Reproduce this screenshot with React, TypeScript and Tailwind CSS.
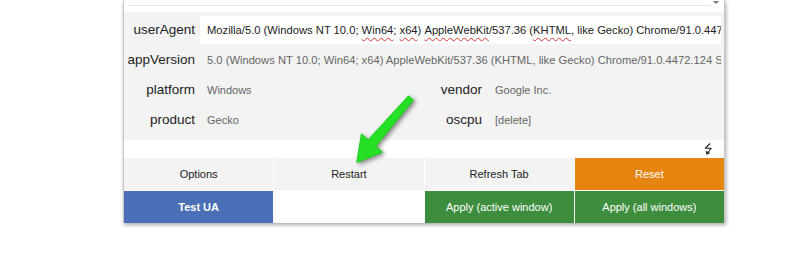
import React from "react";

const sq = "underline decoration-wavy decoration-[#e03030] decoration-1 underline-offset-[3px]";

function Btn({ children, cls }: { children: React.ReactNode; cls: string }) {
  return (
    <div className={`h-[32px] flex items-center justify-center text-[11px] ${cls}`}>{children}</div>
  );
}

export default function App() {
  return (
    <div className="relative w-[800px] h-[270px] bg-white overflow-hidden" style={{ fontFamily: '"Liberation Sans", Arial, sans-serif' }}>
      <div className="ml-[123px] w-[602px] border-l border-r border-[#c8c8c8] shadow-[1px_2px_4px_rgba(0,0,0,0.35)] bg-white">
        {/* top select remnant */}
        <div className="h-[12px] bg-white flex items-start">
          <div className="ml-[4px] flex-1 h-[6px] border-b border-[#e4e4e4]" />
          <div className="w-[10px] flex justify-center pt-[1px]">
            <div className="w-0 h-0 border-l-[3px] border-r-[3px] border-t-[3px] border-l-transparent border-r-transparent border-t-[#777]" />
          </div>
          <div className="w-[3px]" />
        </div>
        {/* info area */}
        <div className="bg-[#f3f3f3] pt-[3px] pb-[5px]">
          <div className="h-[30px] flex items-center">
            <div className="w-[76px] pr-[5px] text-right text-[13.5px] text-[#222]">userAgent</div>
            <div className="flex-1 mr-[3px] h-[28px] bg-white flex items-center pl-[7px] overflow-hidden whitespace-pre text-[11.2px] text-[#222]">
              {"Mozilla/5.0 (Windows NT 10.0; "}
              <span className={sq}>Win64</span>
              {"; "}
              <span className={sq}>x64</span>
              {") "}
              <span className={sq}>AppleWebKit</span>
              {"/537.36 ("}
              <span className={sq}>KHTML</span>
              {", like Gecko) Chrome/91.0.4472.124 Safari/537.36"}
            </div>
          </div>
          <div className="h-[30px] flex items-center">
            <div className="w-[76px] pr-[5px] text-right text-[13.5px] text-[#222]">appVersion</div>
            <div className="flex-1 mr-[3px] pl-[7px] overflow-hidden whitespace-pre text-[11.2px] text-[#666]">
              {"5.0 (Windows NT 10.0; Win64; x64) AppleWebKit/537.36 (KHTML, like Gecko) Chrome/91.0.4472.124 Safari/537.36"}
            </div>
          </div>
          <div className="grid grid-cols-[76px_220px_64px_1fr]">
            <div className="h-[30px] flex items-center justify-end pr-[5px] text-[13.5px] text-[#222]">platform</div>
            <div className="h-[30px] flex items-center pl-[7px] text-[11px] text-[#666]">Windows</div>
            <div className="h-[30px] flex items-center justify-end pr-[2px] text-[13.5px] text-[#222]">vendor</div>
            <div className="h-[30px] flex items-center pl-[11px] text-[11px] text-[#666]">Google Inc.</div>
            <div className="h-[30px] flex items-center justify-end pr-[5px] text-[13.5px] text-[#222]">product</div>
            <div className="h-[30px] flex items-center pl-[7px] text-[11px] text-[#666]">Gecko</div>
            <div className="h-[30px] flex items-center justify-end pr-[2px] text-[13.5px] text-[#222]">oscpu</div>
            <div className="h-[30px] flex items-center pl-[11px] text-[11px] text-[#666]">[delete]</div>
          </div>
        </div>
        {/* white strip with icon */}
        <div className="h-[18px] bg-white flex items-center justify-end pr-[11px]">
          <svg width="9" height="12" viewBox="0 0 9 12" fill="none" stroke="#222" strokeWidth="1.1">
            <path d="M6 0.5 L1.5 5 L7 5.5 L3.5 10" />
            <path d="M2.2 8.2 L3 11 L5.6 10" fill="#222" />
          </svg>
        </div>
        {/* buttons */}
        <div className="grid grid-cols-4 gap-px bg-white">
          <Btn cls="bg-[#f3f3f3] text-[#222]">Options</Btn>
          <Btn cls="bg-[#f3f3f3] text-[#222]">Restart</Btn>
          <Btn cls="bg-[#f3f3f3] text-[#222]">Refresh Tab</Btn>
          <Btn cls="bg-[#e5840f] text-white">Reset</Btn>
          <Btn cls="bg-[#4a6fb6] text-white font-bold">Test UA</Btn>
          <Btn cls="bg-white text-white"> </Btn>
          <Btn cls="bg-[#3c8e3c] text-white">Apply (active window)</Btn>
          <Btn cls="bg-[#3c8e3c] text-white">Apply (all windows)</Btn>
        </div>
      </div>
      {/* green annotation arrow */}
      <svg className="absolute left-0 top-0 pointer-events-none" width="800" height="270" style={{ filter: "drop-shadow(2px 2px 2px rgba(0,0,0,0.45))" }}>
        <polygon
          points="413.5,100 408.5,95.8 368.2,139.7 361.4,133.8 356.8,162.5 382.6,152.2 375.8,146.3"
          fill="#25e025"
          stroke="#1fcf1f"
          strokeWidth="1"
          strokeLinejoin="round"
        />
      </svg>
    </div>
  );
}
